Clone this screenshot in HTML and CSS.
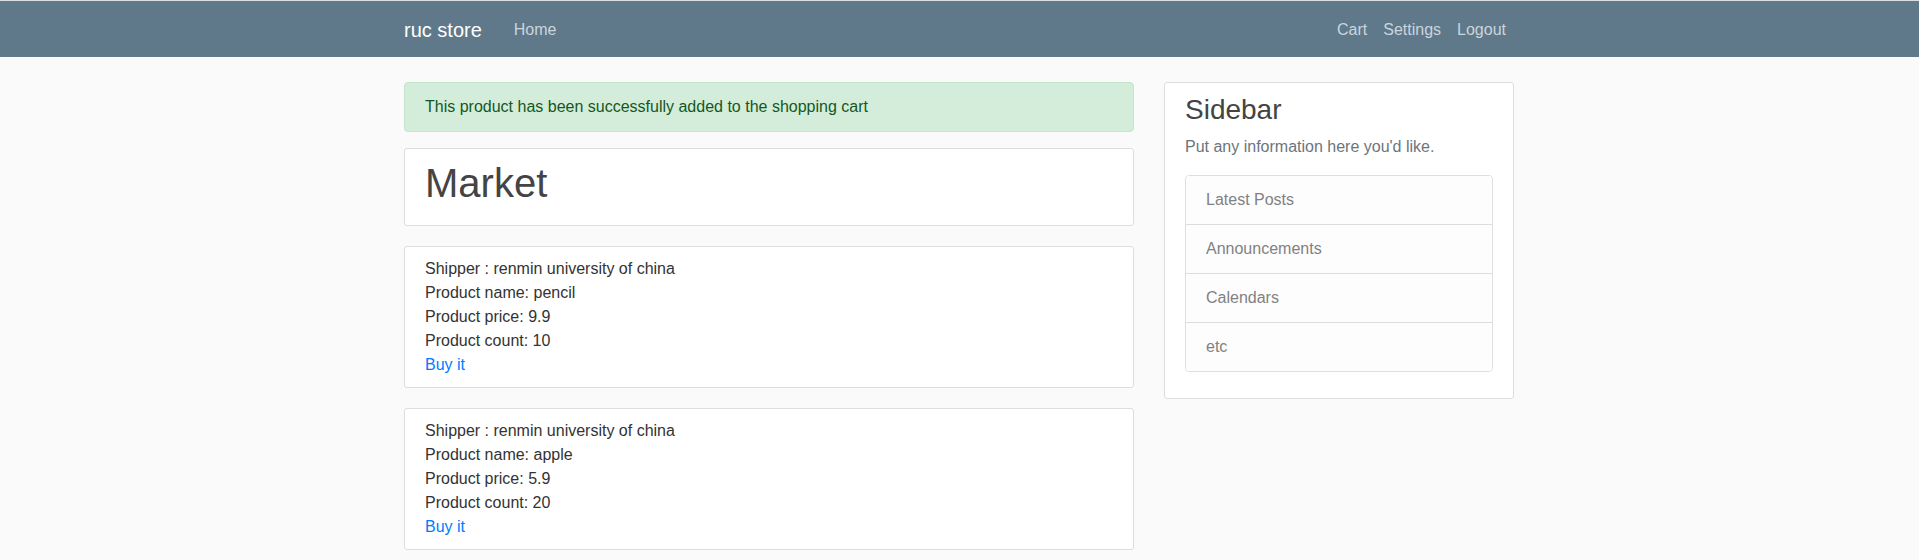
FILE: index.html
```html
<!DOCTYPE html>
<html lang="en">
<head>
<meta charset="utf-8">
<title>ruc store</title>
<link rel="stylesheet" href="styles.css">
</head>
<body>
<header class="site-header">
  <nav class="navbar">
    <div class="nav-inner">
      <div class="nav-left">
        <a class="brand" href="#">ruc store</a>
        <a class="nav-link" href="#">Home</a>
      </div>
      <div class="nav-right">
        <a class="nav-link" href="#">Cart</a>
        <a class="nav-link" href="#">Settings</a>
        <a class="nav-link" href="#">Logout</a>
      </div>
    </div>
  </nav>
</header>
<main class="container">
  <div class="row">
    <div class="col-main">
      <div class="alert">This product has been successfully added to the shopping cart</div>
      <div class="content-section">
        <h1 class="title">Market</h1>
      </div>
      <div class="content-section product">
        <div>Shipper : renmin university of china</div>
        <div>Product name: pencil</div>
        <div>Product price: 9.9</div>
        <div>Product count: 10</div>
        <a class="buy" href="#">Buy it</a>
      </div>
      <div class="content-section product">
        <div>Shipper : renmin university of china</div>
        <div>Product name: apple</div>
        <div>Product price: 5.9</div>
        <div>Product count: 20</div>
        <a class="buy" href="#">Buy it</a>
      </div>
    </div>
    <aside class="col-side">
      <div class="content-section sidebar">
        <h3 class="side-title">Sidebar</h3>
        <p class="text-muted">Put any information here you'd like.</p>
        <ul class="list-group">
          <li class="list-item">Latest Posts</li>
          <li class="list-item">Announcements</li>
          <li class="list-item">Calendars</li>
          <li class="list-item">etc</li>
        </ul>
      </div>
    </aside>
  </div>
</main>
</body>
</html>
```

FILE: styles.css
```css
* { box-sizing: border-box; }

html, body {
  margin: 0;
  padding: 0;
}

body {
  background: #fafafa;
  color: #333333;
  font-family: "Liberation Sans", Arial, sans-serif;
  font-size: 16px;
  line-height: 1.5;
  border-top: 1px solid #dcdfe2;
}

a { text-decoration: none; }

.navbar {
  background-color: #5f788a;
  height: 56px;
}

.nav-inner {
  width: 1140px;
  margin-left: calc(50% - 570.5px);
  padding: 2px 15px 0;
  height: 100%;
  display: flex;
  align-items: center;
  justify-content: space-between;
}

.nav-left, .nav-right {
  display: flex;
  align-items: center;
}

.brand {
  color: #ffffff;
  font-size: 20px;
  line-height: 30px;
  padding: 5px 0;
  margin-right: 24px;
}

.nav-link {
  color: #cbd5db;
  padding: 8px;
  line-height: 24px;
}

.container {
  width: 1140px;
  margin: 25px 0 0 calc(50% - 570.5px);
  padding: 0 15px;
}

.row {
  display: grid;
  grid-template-columns: 730px 350px;
  column-gap: 30px;
  align-items: start;
}

.alert {
  background: #d4edda;
  border: 1px solid #c3e6cb;
  color: #155724;
  border-radius: 4px;
  padding: 12px 20px;
  margin-bottom: 16px;
}

.content-section {
  background: #ffffff;
  padding: 10px 20px;
  border: 1px solid #dddddd;
  border-radius: 3px;
  margin-bottom: 20px;
}

.title {
  margin: 0 0 8px;
  font-size: 40px;
  font-weight: 500;
  line-height: 1.2;
  color: #444444;
}

.buy {
  color: #007bff;
}

.side-title {
  margin: 0 0 8px;
  font-size: 28px;
  font-weight: 500;
  line-height: 1.2;
  color: #444444;
}

.text-muted {
  color: #6c757d;
  margin: 0 0 16px;
}

.list-group {
  list-style: none;
  margin: 0 0 16px;
  padding: 0;
  border: 1px solid rgba(0,0,0,.125);
  border-radius: 4px;
  overflow: hidden;
}

.list-item {
  color: #818182;
  background: #fdfdfe;
  padding: 12px 20px;
  border-top: 1px solid rgba(0,0,0,.125);
}

.list-item:first-child {
  border-top: none;
}
```
